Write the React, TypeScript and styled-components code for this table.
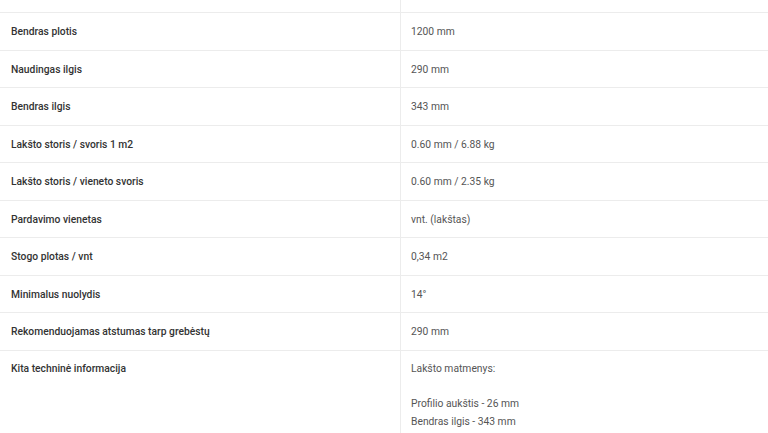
import React from "react";
import styled, { createGlobalStyle } from "styled-components";

const Global = createGlobalStyle`
  html, body { margin: 0; padding: 0; background: #fff; }
  body { font-family: Roboto, "Noto Sans", Arial, sans-serif; overflow: hidden; height: 433px; }
`;

const Table = styled.div`
  display: grid;
  grid-template-columns: 400px 1fr;
  width: 768px;
  margin-top: -24.5px;
`;

const Cell = styled.div<{ $value?: boolean; $top?: boolean }>`
  box-sizing: border-box;
  min-height: 37.5px;
  padding: ${(p) => (p.$top ? "9px 11px 12px" : "2px 11px 0")};
  padding-left: ${(p) => (p.$value ? "10px" : "11px")};
  display: flex;
  flex-direction: column;
  justify-content: ${(p) => (p.$top ? "flex-start" : "center")};
  border-bottom: 1px solid #ececec;
  border-left: ${(p) => (p.$value ? "1px solid #ececec" : "none")};
  font-size: 10.3px;
  line-height: 17.75px;
  font-weight: ${(p) => (p.$value ? 400 : 500)};
  color: ${(p) => (p.$value ? "#555" : "#333")};
`;

const Line = styled.div<{ $gap?: boolean }>`
  margin-top: ${(p) => (p.$gap ? "18px" : "0")};
`;

const rows: [string, string][] = [
  ["", ""],
  ["Bendras plotis", "1200 mm"],
  ["Naudingas ilgis", "290 mm"],
  ["Bendras ilgis", "343 mm"],
  ["Lakšto storis / svoris 1 m2", "0.60 mm / 6.88 kg"],
  ["Lakšto storis / vieneto svoris", "0.60 mm / 2.35 kg"],
  ["Pardavimo vienetas", "vnt. (lakštas)"],
  ["Stogo plotas / vnt", "0,34 m2"],
  ["Minimalus nuolydis", "14°"],
  ["Rekomenduojamas atstumas tarp grebėstų", "290 mm"],
];

export default function App() {
  return (
    <>
      <Global />
      <Table>
        {rows.map(([k, v], i) => (
          <React.Fragment key={i}>
            <Cell>{k}</Cell>
            <Cell $value>{v}</Cell>
          </React.Fragment>
        ))}
        <Cell $top>Kita techninė informacija</Cell>
        <Cell $value $top>
          <Line>Lakšto matmenys:</Line>
          <Line $gap>Profilio aukštis - 26 mm</Line>
          <Line>Bendras ilgis - 343 mm</Line>
        </Cell>
      </Table>
    </>
  );
}
